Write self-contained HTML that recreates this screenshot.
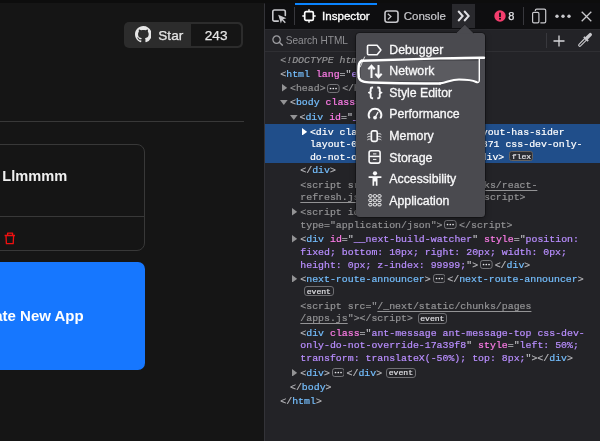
<!DOCTYPE html><html><head><meta charset="utf-8"><style>html,body{margin:0;padding:0;width:600px;height:441px;overflow:hidden;background:#151515;position:relative}</style></head><body><div style="position:absolute;left:0;top:0;width:600px;height:441px;overflow:hidden;will-change:transform"><div style="position:absolute;left:0px;top:0px;width:264px;height:441px;background:#151515;"></div><div style="position:absolute;left:0px;top:0px;width:600px;height:3px;background:#0d0d0d;"></div><div style="position:absolute;left:124px;top:21.5px;width:119px;height:26.5px;border-radius:5px;background:#2c2c2c;"></div><div style="position:absolute;left:191px;top:23.5px;width:50px;height:22.5px;border-radius:0 4px 4px 0;background:#151515;"></div><svg style="position:absolute;left:134.5px;top:26.3px" width="16.7" height="16.7" viewBox="0 0 16 16"><path fill="#e6e6e6" d="M8 0C3.58 0 0 3.58 0 8c0 3.54 2.29 6.53 5.47 7.59.4.07.55-.17.55-.38 0-.19-.01-.82-.01-1.49-2.01.37-2.53-.49-2.69-.94-.09-.23-.48-.94-.82-1.13-.28-.15-.68-.52-.01-.53.63-.01 1.08.58 1.23.82.72 1.21 1.87.87 2.33.66.07-.52.28-.87.51-1.07-1.78-.2-3.64-.89-3.64-3.95 0-.87.31-1.59.82-2.15-.08-.2-.36-1.02.08-2.12 0 0 .67-.21 2.2.82.64-.18 1.32-.27 2-.27.68 0 1.36.09 2 .27 1.53-1.04 2.2-.82 2.2-.82.44 1.1.16 1.92.08 2.12.51.56.82 1.27.82 2.15 0 3.07-1.87 3.75-3.65 3.95.29.25.54.73.54 1.48 0 1.07-.01 1.93-.01 2.2 0 .21.15.46.55.38A8.013 8.013 0 0016 8c0-4.42-3.58-8-8-8z"/></svg><div style="position:absolute;left:158.30px;top:25.68px;line-height:20px;font-size:13.6px;font-family:'Liberation Sans', sans-serif;font-weight:400;color:#e6e6e6;white-space:pre;-webkit-text-stroke:0.25px #e6e6e6;">Star</div><div style="position:absolute;left:204.80px;top:25.68px;line-height:20px;font-size:13.6px;font-family:'Liberation Sans', sans-serif;font-weight:400;color:#e6e6e6;white-space:pre;-webkit-text-stroke:0.25px #e6e6e6;">243</div><div style="position:absolute;left:0px;top:121px;width:243.5px;height:1px;background:#383838;"></div><div style="position:absolute;left:-20px;top:143.6px;width:164.6px;height:107.9px;border:1.2px solid #383838;border-radius:8px;box-sizing:border-box;"></div><div style="position:absolute;left:0px;top:216px;width:144px;height:1.2px;background:#383838;"></div><div style="position:absolute;left:2.30px;top:165.94px;line-height:20px;font-size:14.6px;font-family:'Liberation Sans', sans-serif;font-weight:700;color:#f0f0f0;white-space:pre;">Llmmmm</div><svg style="position:absolute;left:3px;top:231px" width="14" height="15" viewBox="0 0 14 15"><path d="M1.6 4.5H12M4.6 4.3V2.2H9.6V4.3M3 4.6L3.4 12.6H10.2L10.6 4.6" fill="none" stroke="#f01010" stroke-width="1.3" stroke-linejoin="round"/></svg><div style="position:absolute;left:-20px;top:262px;width:165px;height:108.2px;border-radius:7px;background:#1677ff;"></div><div style="position:absolute;left:-30.80px;top:306.20px;line-height:20px;font-size:15px;font-family:'Liberation Sans', sans-serif;font-weight:700;color:#ffffff;white-space:pre;">Create New App</div><div style="position:absolute;left:264px;top:3px;width:336px;height:438px;background:#232327;"></div><div style="position:absolute;left:264px;top:3.5px;width:1px;height:438px;background:#333338;"></div><div style="position:absolute;left:265px;top:3px;width:335px;height:26.2px;background:#0e0e10;"></div><div style="position:absolute;left:265px;top:29px;width:335px;height:1px;background:#2a2a2e;"></div><div style="position:absolute;left:265px;top:50.8px;width:335px;height:1px;background:#2f2f33;"></div><div style="position:absolute;left:294.5px;top:3.2px;width:82.5px;height:2.2px;background:#0a84ff;"></div><div style="position:absolute;left:294px;top:7px;width:1px;height:17.5px;background:#38383d;"></div><svg style="position:absolute;left:270px;top:7px" width="18" height="18" viewBox="0 0 18 18"><path d="M8.3 14.1H4.5C3.4 14.1 2.8 13.5 2.8 12.4V4.7C2.8 3.6 3.4 3 4.5 3H13.6C14.7 3 15.3 3.6 15.3 4.7V8.4" fill="none" stroke="#c8c8cc" stroke-width="1.6" stroke-linecap="round"/><path d="M8.2 7.8L16.4 11.2L13 12.3L15.8 15.3L14.8 16.3L12 13.3L10.9 16.5Z" fill="#c8c8cc"/></svg><svg style="position:absolute;left:302px;top:9px" width="14" height="14" viewBox="0 0 14 14"><rect x="2.7" y="2.7" width="8.6" height="8.6" rx="1.4" fill="none" stroke="#ffffff" stroke-width="1.7"/><path d="M7 0.3V2.6M7 11.4V13.7M0.3 7H2.6M11.4 7H13.7" stroke="#ffffff" stroke-width="1.4"/></svg><div style="position:absolute;left:322.00px;top:5.98px;line-height:20px;font-size:11.6px;font-family:'Liberation Sans', sans-serif;font-weight:400;color:#ffffff;white-space:pre;-webkit-text-stroke:0.32px #fff;">Inspector</div><svg style="position:absolute;left:383.5px;top:9.5px" width="15" height="13" viewBox="0 0 15 13"><rect x="1" y="1" width="13" height="11.2" rx="2.2" fill="none" stroke="#c8c8cc" stroke-width="1.6"/><path d="M3.8 3.7L6.9 6.6L3.8 9.5" fill="none" stroke="#c8c8cc" stroke-width="1.3"/></svg><div style="position:absolute;left:403.70px;top:6.31px;line-height:20px;font-size:11.5px;font-family:'Liberation Sans', sans-serif;font-weight:400;color:#c8c8cc;white-space:pre;-webkit-text-stroke:0.2px #c8c8cc;">Console</div><div style="position:absolute;left:452px;top:3.5px;width:23px;height:24.5px;background:#29292d;"></div><svg style="position:absolute;left:457px;top:10px" width="14" height="12" viewBox="0 0 14 12"><path d="M1.2 1L5.7 6L1.2 11M7.2 1L11.7 6L7.2 11" fill="none" stroke="#e0e0e4" stroke-width="1.9"/></svg><svg style="position:absolute;left:494.3px;top:10px" width="12" height="12" viewBox="0 0 12 12"><circle cx="6" cy="6" r="5.7" fill="#f43d6d"/><rect x="5.1" y="2.4" width="1.8" height="4.6" rx="0.6" fill="#0e0e10"/><circle cx="6" cy="8.8" r="1" fill="#0e0e10"/></svg><div style="position:absolute;left:508.20px;top:6.19px;line-height:20px;font-size:11px;font-family:'Liberation Sans', sans-serif;font-weight:400;color:#e0e0e4;white-space:pre;-webkit-text-stroke:0.25px #e0e0e4;">8</div><div style="position:absolute;left:523px;top:7.3px;width:1px;height:17.5px;background:#38383d;"></div><svg style="position:absolute;left:531px;top:8px" width="16" height="16" viewBox="0 0 16 16"><path d="M4.3 3.1V2.6C4.3 1.7 4.8 1.2 5.7 1.2H13.3C14.2 1.2 14.7 1.7 14.7 2.6V13.4C14.7 14.3 14.2 14.8 13.3 14.8H9.4" fill="none" stroke="#c8c8cc" stroke-width="1.2"/><rect x="1.6" y="4.3" width="6.3" height="10.5" rx="1.3" fill="none" stroke="#c8c8cc" stroke-width="1.2"/></svg><svg style="position:absolute;left:555px;top:13px" width="16" height="6" viewBox="0 0 16 6"><circle cx="2" cy="3.3" r="1.7" fill="#c8c8cc"/><circle cx="8" cy="3.3" r="1.7" fill="#c8c8cc"/><circle cx="14" cy="3.3" r="1.7" fill="#c8c8cc"/></svg><svg style="position:absolute;left:581px;top:10.5px" width="11" height="11" viewBox="0 0 11 11"><path d="M0.7 0.7L10.3 10.3M10.3 0.7L0.7 10.3" stroke="#c8c8cc" stroke-width="1.3"/></svg><svg style="position:absolute;left:271.5px;top:35px" width="12" height="11" viewBox="0 0 12 11"><circle cx="4.6" cy="4.6" r="3.7" fill="none" stroke="#9d9da1" stroke-width="1.3"/><path d="M7.3 7.3L10.8 10.6" stroke="#9d9da1" stroke-width="1.4"/></svg><div style="position:absolute;left:285.70px;top:31.10px;line-height:20px;font-size:10.1px;font-family:'Liberation Sans', sans-serif;font-weight:400;color:#909094;white-space:pre;">Search HTML</div><div style="position:absolute;left:545.5px;top:33px;width:1px;height:14.5px;background:#38383d;"></div><svg style="position:absolute;left:553px;top:34.5px" width="12" height="12" viewBox="0 0 12 12"><path d="M6 0.5V11.5M0.5 6H11.5" stroke="#d7d7db" stroke-width="1.3"/></svg><svg style="position:absolute;left:577px;top:32px" width="16" height="16" viewBox="0 0 16 16"><path d="M2.8 13.1L8.6 7.3" stroke="#c8c8cc" stroke-width="3.4" stroke-linecap="round"/><path d="M2.8 13.1L8.6 7.3" stroke="#232327" stroke-width="1.2" stroke-linecap="round"/><path d="M6.9 4.9L11.1 9.1" stroke="#c8c8cc" stroke-width="1.8"/><path d="M9.6 6.3L13.3 2.6" stroke="#c8c8cc" stroke-width="3.4" stroke-linecap="round"/></svg><div style="position:absolute;left:265px;top:123.8px;width:335px;height:39.4px;background:#204e8a;"></div><div style="position:absolute;left:280.30px;top:51.17px;line-height:20px;font-size:9.9px;font-family:'Liberation Mono', monospace;white-space:pre;-webkit-text-stroke:0.2px currentColor;"><span style="color:#939395;font-style:italic">&lt;!DOCTYPE html&gt;</span></div><div style="position:absolute;left:280.30px;top:65.17px;line-height:20px;font-size:9.9px;font-family:'Liberation Mono', monospace;white-space:pre;-webkit-text-stroke:0.2px currentColor;"><span style="color:#b6b6ba;">&lt;</span><span style="color:#75bfff;">html</span> <span style="color:#ff7de9;">lang</span><span style="color:#b6b6ba;">="</span><span style="color:#b98eff;">en</span><span style="color:#b6b6ba;">"&gt;</span></div><svg style="position:absolute;left:281.8px;top:84.4px" width="5.2" height="7.6" viewBox="0 0 5.2 7.6"><path d="M0 0V7.6L5.2 3.8Z" fill="#939395"/></svg><div style="position:absolute;left:290.00px;top:79.47px;line-height:20px;font-size:9.9px;font-family:'Liberation Mono', monospace;white-space:pre;-webkit-text-stroke:0.2px currentColor;"><span style="color:#939395;">&lt;head&gt;</span><svg style="display:inline-block;vertical-align:-1.2px;margin:0 2.1px 0 1.9px" width="12.6" height="9" viewBox="0 0 12.6 9"><rect x="0.5" y="0.5" width="11.6" height="8" rx="2.3" fill="none" stroke="#77777b" stroke-width="1"/><circle cx="3.55" cy="4.5" r="0.85" fill="#e6e6ea"/><circle cx="6.3" cy="4.5" r="0.85" fill="#e6e6ea"/><circle cx="9.05" cy="4.5" r="0.85" fill="#e6e6ea"/></svg><span style="color:#939395;">&lt;/head&gt;</span></div><svg style="position:absolute;left:280.0px;top:100.0px" width="7.6" height="5" viewBox="0 0 7.6 5"><path d="M0 0H7.6L3.8 5Z" fill="#939395"/></svg><div style="position:absolute;left:290.00px;top:93.27px;line-height:20px;font-size:9.9px;font-family:'Liberation Mono', monospace;white-space:pre;-webkit-text-stroke:0.2px currentColor;"><span style="color:#b6b6ba;">&lt;</span><span style="color:#75bfff;">body</span> <span style="color:#ff7de9;">class</span><span style="color:#b6b6ba;">="</span><span style="color:#b98eff;">app-body</span><span style="color:#b6b6ba;">"&gt;</span></div><svg style="position:absolute;left:290.0px;top:114.5px" width="7.6" height="5" viewBox="0 0 7.6 5"><path d="M0 0H7.6L3.8 5Z" fill="#939395"/></svg><div style="position:absolute;left:299.50px;top:107.77px;line-height:20px;font-size:9.9px;font-family:'Liberation Mono', monospace;white-space:pre;-webkit-text-stroke:0.2px currentColor;"><span style="color:#b6b6ba;">&lt;</span><span style="color:#75bfff;">div</span> <span style="color:#ff7de9;">id</span><span style="color:#b6b6ba;">="</span><span style="color:#b98eff;">__next</span><span style="color:#b6b6ba;">"&gt;</span></div><svg style="position:absolute;left:301.7px;top:127.5px" width="5.2" height="7.6" viewBox="0 0 5.2 7.6"><path d="M0 0V7.6L5.2 3.8Z" fill="#ffffff"/></svg><div style="position:absolute;left:309.90px;top:122.57px;line-height:20px;font-size:9.9px;font-family:'Liberation Mono', monospace;white-space:pre;-webkit-text-stroke:0.2px currentColor;"><span style="color:#ffffff;">&lt;div class="ant-layout ant-layout-has-sider</span></div><div style="position:absolute;left:309.90px;top:135.17px;line-height:20px;font-size:9.9px;font-family:'Liberation Mono', monospace;white-space:pre;-webkit-text-stroke:0.2px currentColor;"><span style="color:#ffffff;">layout-0-2-1 app-layout-s1cc8871 css-dev-only-</span></div><div style="position:absolute;left:309.90px;top:147.67px;line-height:20px;font-size:9.9px;font-family:'Liberation Mono', monospace;white-space:pre;-webkit-text-stroke:0.2px currentColor;"><span style="color:#ffffff;">do-not-override-1a39f8"&gt;</span><svg style="display:inline-block;vertical-align:-1.2px;margin:0 2.1px 0 1.9px" width="12.6" height="9" viewBox="0 0 12.6 9"><rect x="0.5" y="0.5" width="11.6" height="8" rx="2.3" fill="none" stroke="#8a9bb5" stroke-width="1"/><circle cx="3.55" cy="4.5" r="0.85" fill="#e6e6ea"/><circle cx="6.3" cy="4.5" r="0.85" fill="#e6e6ea"/><circle cx="9.05" cy="4.5" r="0.85" fill="#e6e6ea"/></svg><span style="color:#ffffff;">&lt;/div&gt;</span></div><div style="position:absolute;left:509.3px;top:151.3px;width:24.2px;height:10px;border:1px solid #66625f;background:#2b2d33;border-radius:2.5px;box-sizing:border-box"></div><div style="position:absolute;left:511.8px;top:147.04px;line-height:20px;font-size:8.1px;font-family:'Liberation Mono', monospace;color:#e6e6ea;white-space:pre;-webkit-text-stroke:0.2px #e6e6ea">flex</div><div style="position:absolute;left:300.30px;top:160.87px;line-height:20px;font-size:9.9px;font-family:'Liberation Mono', monospace;white-space:pre;-webkit-text-stroke:0.2px currentColor;"><span style="color:#b6b6ba;">&lt;/</span><span style="color:#75bfff;">div</span><span style="color:#b6b6ba;">&gt;</span></div><div style="position:absolute;left:300.30px;top:176.17px;line-height:20px;font-size:9.9px;font-family:'Liberation Mono', monospace;white-space:pre;-webkit-text-stroke:0.2px currentColor;"><span style="color:#939395;">&lt;script src="</span><span style="color:#939395;text-decoration:underline;text-underline-offset:1.5px">/_next/static/chunks/react-</span></div><div style="position:absolute;left:300.30px;top:188.37px;line-height:20px;font-size:9.9px;font-family:'Liberation Mono', monospace;white-space:pre;-webkit-text-stroke:0.2px currentColor;"><span style="color:#939395;text-decoration:underline;text-underline-offset:1.5px">refresh.js?ts=1696512345678</span><span style="color:#939395;">"&gt;&lt;/script&gt;</span></div><svg style="position:absolute;left:292.1px;top:208.0px" width="5.2" height="7.6" viewBox="0 0 5.2 7.6"><path d="M0 0V7.6L5.2 3.8Z" fill="#939395"/></svg><div style="position:absolute;left:300.30px;top:203.07px;line-height:20px;font-size:9.9px;font-family:'Liberation Mono', monospace;white-space:pre;-webkit-text-stroke:0.2px currentColor;"><span style="color:#939395;">&lt;script id="__NEXT_DATA__"</span></div><div style="position:absolute;left:300.30px;top:215.77px;line-height:20px;font-size:9.9px;font-family:'Liberation Mono', monospace;white-space:pre;-webkit-text-stroke:0.2px currentColor;"><span style="color:#939395;">type="application/json"&gt;</span><svg style="display:inline-block;vertical-align:-1.2px;margin:0 2.1px 0 1.9px" width="12.6" height="9" viewBox="0 0 12.6 9"><rect x="0.5" y="0.5" width="11.6" height="8" rx="2.3" fill="none" stroke="#77777b" stroke-width="1"/><circle cx="3.55" cy="4.5" r="0.85" fill="#e6e6ea"/><circle cx="6.3" cy="4.5" r="0.85" fill="#e6e6ea"/><circle cx="9.05" cy="4.5" r="0.85" fill="#e6e6ea"/></svg><span style="color:#939395;">&lt;/script&gt;</span></div><svg style="position:absolute;left:292.1px;top:235.1px" width="5.2" height="7.6" viewBox="0 0 5.2 7.6"><path d="M0 0V7.6L5.2 3.8Z" fill="#939395"/></svg><div style="position:absolute;left:300.30px;top:230.17px;line-height:20px;font-size:9.9px;font-family:'Liberation Mono', monospace;white-space:pre;-webkit-text-stroke:0.2px currentColor;"><span style="color:#b6b6ba;">&lt;</span><span style="color:#75bfff;">div</span> <span style="color:#ff7de9;">id</span><span style="color:#b6b6ba;">="</span><span style="color:#b98eff;">__next-build-watcher</span><span style="color:#b6b6ba;">"</span> <span style="color:#ff7de9;">style</span><span style="color:#b6b6ba;">="</span><span style="color:#b98eff;">position:</span></div><div style="position:absolute;left:300.30px;top:242.87px;line-height:20px;font-size:9.9px;font-family:'Liberation Mono', monospace;white-space:pre;-webkit-text-stroke:0.2px currentColor;"><span style="color:#b98eff;">fixed; bottom: 10px; right: 20px; width: 0px;</span></div><div style="position:absolute;left:300.30px;top:255.57px;line-height:20px;font-size:9.9px;font-family:'Liberation Mono', monospace;white-space:pre;-webkit-text-stroke:0.2px currentColor;"><span style="color:#b98eff;">height: 0px; z-index: 99999;</span><span style="color:#b6b6ba;">"&gt;</span><svg style="display:inline-block;vertical-align:-1.2px;margin:0 2.1px 0 1.9px" width="12.6" height="9" viewBox="0 0 12.6 9"><rect x="0.5" y="0.5" width="11.6" height="8" rx="2.3" fill="none" stroke="#77777b" stroke-width="1"/><circle cx="3.55" cy="4.5" r="0.85" fill="#e6e6ea"/><circle cx="6.3" cy="4.5" r="0.85" fill="#e6e6ea"/><circle cx="9.05" cy="4.5" r="0.85" fill="#e6e6ea"/></svg><span style="color:#b6b6ba;">&lt;/</span><span style="color:#75bfff;">div</span><span style="color:#b6b6ba;">&gt;</span></div><svg style="position:absolute;left:292.1px;top:274.8px" width="5.2" height="7.6" viewBox="0 0 5.2 7.6"><path d="M0 0V7.6L5.2 3.8Z" fill="#939395"/></svg><div style="position:absolute;left:300.30px;top:269.87px;line-height:20px;font-size:9.9px;font-family:'Liberation Mono', monospace;white-space:pre;-webkit-text-stroke:0.2px currentColor;"><span style="color:#b6b6ba;">&lt;</span><span style="color:#75bfff;">next-route-announcer</span><span style="color:#b6b6ba;">&gt;</span><svg style="display:inline-block;vertical-align:-1.2px;margin:0 2.1px 0 1.9px" width="12.6" height="9" viewBox="0 0 12.6 9"><rect x="0.5" y="0.5" width="11.6" height="8" rx="2.3" fill="none" stroke="#77777b" stroke-width="1"/><circle cx="3.55" cy="4.5" r="0.85" fill="#e6e6ea"/><circle cx="6.3" cy="4.5" r="0.85" fill="#e6e6ea"/><circle cx="9.05" cy="4.5" r="0.85" fill="#e6e6ea"/></svg><span style="color:#b6b6ba;">&lt;/</span><span style="color:#75bfff;">next-route-announcer</span><span style="color:#b6b6ba;">&gt;</span></div><div style="position:absolute;left:304.2px;top:285.9px;width:29.8px;height:10.6px;border:1px solid #6e6e72;border-radius:3px;box-sizing:border-box"></div><div style="position:absolute;left:306.7px;top:281.74px;line-height:20px;font-size:8.1px;font-family:'Liberation Mono', monospace;color:#e0e0e4;white-space:pre;-webkit-text-stroke:0.2px #e0e0e4">event</div><div style="position:absolute;left:300.30px;top:296.57px;line-height:20px;font-size:9.9px;font-family:'Liberation Mono', monospace;white-space:pre;-webkit-text-stroke:0.2px currentColor;"><span style="color:#939395;">&lt;script src="</span><span style="color:#939395;text-decoration:underline;text-underline-offset:1.5px">/_next/static/chunks/pages</span></div><div style="position:absolute;left:300.30px;top:309.27px;line-height:20px;font-size:9.9px;font-family:'Liberation Mono', monospace;white-space:pre;-webkit-text-stroke:0.2px currentColor;"><span style="color:#939395;text-decoration:underline;text-underline-offset:1.5px">/apps.js</span><span style="color:#939395;">"&gt;&lt;/script&gt;</span></div><div style="position:absolute;left:417.67881px;top:313.2px;width:29.8px;height:10.6px;border:1px solid #6e6e72;border-radius:3px;box-sizing:border-box"></div><div style="position:absolute;left:420.17881px;top:309.04px;line-height:20px;font-size:8.1px;font-family:'Liberation Mono', monospace;color:#e0e0e4;white-space:pre;-webkit-text-stroke:0.2px #e0e0e4">event</div><div style="position:absolute;left:300.30px;top:323.57px;line-height:20px;font-size:9.9px;font-family:'Liberation Mono', monospace;white-space:pre;-webkit-text-stroke:0.2px currentColor;"><span style="color:#b6b6ba;">&lt;</span><span style="color:#75bfff;">div</span> <span style="color:#ff7de9;">class</span><span style="color:#b6b6ba;">="</span><span style="color:#b98eff;">ant-message ant-message-top css-dev-</span></div><div style="position:absolute;left:300.30px;top:336.27px;line-height:20px;font-size:9.9px;font-family:'Liberation Mono', monospace;white-space:pre;-webkit-text-stroke:0.2px currentColor;"><span style="color:#b98eff;">only-do-not-override-17a39f8</span><span style="color:#b6b6ba;">"</span> <span style="color:#ff7de9;">style</span><span style="color:#b6b6ba;">="</span><span style="color:#b98eff;">left: 50%;</span></div><div style="position:absolute;left:300.30px;top:348.87px;line-height:20px;font-size:9.9px;font-family:'Liberation Mono', monospace;white-space:pre;-webkit-text-stroke:0.2px currentColor;"><span style="color:#b98eff;">transform: translateX(-50%); top: 8px;</span><span style="color:#b6b6ba;">"&gt;</span><span style="color:#b6b6ba;">&lt;/</span><span style="color:#75bfff;">div</span><span style="color:#b6b6ba;">&gt;</span></div><svg style="position:absolute;left:292.1px;top:368.5px" width="5.2" height="7.6" viewBox="0 0 5.2 7.6"><path d="M0 0V7.6L5.2 3.8Z" fill="#939395"/></svg><div style="position:absolute;left:300.30px;top:363.57px;line-height:20px;font-size:9.9px;font-family:'Liberation Mono', monospace;white-space:pre;-webkit-text-stroke:0.2px currentColor;"><span style="color:#b6b6ba;">&lt;</span><span style="color:#75bfff;">div</span><span style="color:#b6b6ba;">&gt;</span><svg style="display:inline-block;vertical-align:-1.2px;margin:0 2.1px 0 1.9px" width="12.6" height="9" viewBox="0 0 12.6 9"><rect x="0.5" y="0.5" width="11.6" height="8" rx="2.3" fill="none" stroke="#77777b" stroke-width="1"/><circle cx="3.55" cy="4.5" r="0.85" fill="#e6e6ea"/><circle cx="6.3" cy="4.5" r="0.85" fill="#e6e6ea"/><circle cx="9.05" cy="4.5" r="0.85" fill="#e6e6ea"/></svg><span style="color:#b6b6ba;">&lt;/</span><span style="color:#75bfff;">div</span><span style="color:#b6b6ba;">&gt;</span></div><div style="position:absolute;left:386.25089px;top:367.5px;width:29.8px;height:10.6px;border:1px solid #6e6e72;border-radius:3px;box-sizing:border-box"></div><div style="position:absolute;left:388.75089px;top:363.34px;line-height:20px;font-size:8.1px;font-family:'Liberation Mono', monospace;color:#e0e0e4;white-space:pre;-webkit-text-stroke:0.2px #e0e0e4">event</div><div style="position:absolute;left:290.00px;top:377.77px;line-height:20px;font-size:9.9px;font-family:'Liberation Mono', monospace;white-space:pre;-webkit-text-stroke:0.2px currentColor;"><span style="color:#b6b6ba;">&lt;/</span><span style="color:#75bfff;">body</span><span style="color:#b6b6ba;">&gt;</span></div><div style="position:absolute;left:280.30px;top:391.77px;line-height:20px;font-size:9.9px;font-family:'Liberation Mono', monospace;white-space:pre;-webkit-text-stroke:0.2px currentColor;"><span style="color:#b6b6ba;">&lt;/</span><span style="color:#75bfff;">html</span><span style="color:#b6b6ba;">&gt;</span></div><div style="position:absolute;left:356.3px;top:32.5px;width:128.7px;height:184px;background:#4a4a4f;border-radius:3.5px;box-shadow:0 0 0 0.6px rgba(0,0,0,0.5), 0 2px 6px rgba(0,0,0,0.35);"></div><svg style="position:absolute;left:455.5px;top:24px" width="18" height="10" viewBox="0 0 18 10"><path d="M0.3 9.3L8.9 0.7L17.3 9.3" fill="#4a4a4f" stroke="rgba(0,0,0,0.45)" stroke-width="0.8"/><path d="M0 9.6L8.9 0.9L17.6 9.6Z" fill="#4a4a4f"/></svg><div style="position:absolute;left:360.5px;top:61px;width:119px;height:20px;background:#5b5b60;"></div><div style="position:absolute;left:389.30px;top:39.54px;line-height:20px;font-size:12.3px;font-family:'Liberation Sans', sans-serif;font-weight:400;color:#f9f9fa;white-space:pre;-webkit-text-stroke:0.3px #f9f9fa;">Debugger</div><div style="position:absolute;left:389.30px;top:61.15px;line-height:20px;font-size:12.3px;font-family:'Liberation Sans', sans-serif;font-weight:400;color:#f9f9fa;white-space:pre;-webkit-text-stroke:0.3px #f9f9fa;">Network</div><div style="position:absolute;left:389.30px;top:82.76px;line-height:20px;font-size:12.3px;font-family:'Liberation Sans', sans-serif;font-weight:400;color:#f9f9fa;white-space:pre;-webkit-text-stroke:0.3px #f9f9fa;">Style Editor</div><div style="position:absolute;left:389.30px;top:104.37px;line-height:20px;font-size:12.3px;font-family:'Liberation Sans', sans-serif;font-weight:400;color:#f9f9fa;white-space:pre;-webkit-text-stroke:0.3px #f9f9fa;">Performance</div><div style="position:absolute;left:389.30px;top:125.98px;line-height:20px;font-size:12.3px;font-family:'Liberation Sans', sans-serif;font-weight:400;color:#f9f9fa;white-space:pre;-webkit-text-stroke:0.3px #f9f9fa;">Memory</div><div style="position:absolute;left:389.30px;top:147.59px;line-height:20px;font-size:12.3px;font-family:'Liberation Sans', sans-serif;font-weight:400;color:#f9f9fa;white-space:pre;-webkit-text-stroke:0.3px #f9f9fa;">Storage</div><div style="position:absolute;left:389.30px;top:169.20px;line-height:20px;font-size:12.3px;font-family:'Liberation Sans', sans-serif;font-weight:400;color:#f9f9fa;white-space:pre;-webkit-text-stroke:0.3px #f9f9fa;">Accessibility</div><div style="position:absolute;left:389.30px;top:190.81px;line-height:20px;font-size:12.3px;font-family:'Liberation Sans', sans-serif;font-weight:400;color:#f9f9fa;white-space:pre;-webkit-text-stroke:0.3px #f9f9fa;">Application</div><svg style="position:absolute;left:366px;top:43.5px" width="17" height="12" viewBox="0 0 17 12"><path d="M2.5 1.3H11.1L14.9 6L11.1 10.7H2.5C1.9 10.7 1.5 10.3 1.5 9.7V2.3C1.5 1.7 1.9 1.3 2.5 1.3Z" fill="none" stroke="#f9f9fa" stroke-width="1.6" stroke-linejoin="round"/></svg><svg style="position:absolute;left:366.5px;top:63.5px" width="16" height="15" viewBox="0 0 16 15"><path d="M4.5 14V2M1.3 5.2L4.5 1.8L7.7 5.2M11.5 1V13.2M8.3 9.8L11.5 13.2L14.7 9.8" fill="none" stroke="#f9f9fa" stroke-width="2"/></svg><svg style="position:absolute;left:366.5px;top:85px" width="16" height="15" viewBox="0 0 16 15"><path d="M6.1,2.5 H5.1 C4.1,2.5 3.7,3 3.7,4 V6 C3.7,7 3.1,7.6 1.9,7.6 C3.1,7.6 3.7,8.2 3.7,9.2 V11.7 C3.7,12.7 4.1,13.2 5.1,13.2 H6.1 M10.3,2.5 H11.3 C12.3,2.5 12.7,3 12.7,4 V6 C12.7,7 13.3,7.6 14.5,7.6 C13.3,7.6 12.7,8.2 12.7,9.2 V11.7 C12.7,12.7 12.3,13.2 11.3,13.2 H10.3" fill="none" stroke="#f9f9fa" stroke-width="1.9" stroke-linejoin="round"/></svg><svg style="position:absolute;left:366.5px;top:106px" width="16" height="14" viewBox="0 0 16 14"><path d="M2.29 11.66A6.3 6.3 0 1 1 13.71 11.66" fill="none" stroke="#f9f9fa" stroke-width="2" stroke-linecap="round"/><path d="M8 11.6L10.9 6.4" fill="none" stroke="#f9f9fa" stroke-width="1.2" stroke-linecap="round"/><circle cx="8" cy="11.6" r="1.9" fill="#f9f9fa"/></svg><svg style="position:absolute;left:366px;top:128.5px" width="17" height="14" viewBox="0 0 17 14"><rect x="5.35" y="1.85" width="5.9" height="10.5" rx="1.6" fill="none" stroke="#f9f9fa" stroke-width="1.7"/><path d="M4.4 4.7C3.4 4.7 2.4 4.6 1.3 5.5M4.4 7.4C3.4 7.4 2.4 7.3 1.3 8.2M4.4 10.1C3.4 10.1 2.4 10 1.3 10.9M12.2 4.7C13.2 4.7 14.2 4.6 15.3 5.5M12.2 7.4C13.2 7.4 14.2 7.3 15.3 8.2M12.2 10.1C13.2 10.1 14.2 10 15.3 10.9" fill="none" stroke="#f9f9fa" stroke-width="0.9"/></svg><svg style="position:absolute;left:367px;top:149px" width="15" height="16" viewBox="0 0 15 16"><rect x="2.1" y="1.7" width="11" height="12.4" rx="2" fill="none" stroke="#f9f9fa" stroke-width="1.6"/><path d="M2.1 7.4H13.1" fill="none" stroke="#f9f9fa" stroke-width="1.5"/><path d="M6 4.9H9.4M6 10.4H9.4" fill="none" stroke="#f9f9fa" stroke-width="1"/></svg><svg style="position:absolute;left:366.5px;top:170px" width="16" height="17" viewBox="0 0 16 17"><circle cx="8" cy="3.3" r="2.1" fill="#f9f9fa"/><path d="M1.6 6.2H14.4V7.9H10.5V15.8H8.8V11.6H7.2V15.8H5.5V7.9H1.6Z" fill="#f9f9fa"/></svg><svg style="position:absolute;left:367px;top:193px" width="15" height="15" viewBox="0 0 15 15"><rect x="1.75" y="1.70" width="3.2" height="2.6" rx="0.9" fill="none" stroke="#f9f9fa" stroke-width="1"/><rect x="6.30" y="1.70" width="3.2" height="2.6" rx="0.9" fill="none" stroke="#f9f9fa" stroke-width="1"/><rect x="10.85" y="1.70" width="3.2" height="2.6" rx="0.9" fill="none" stroke="#f9f9fa" stroke-width="1"/><rect x="1.75" y="6.00" width="3.2" height="2.6" rx="0.9" fill="none" stroke="#f9f9fa" stroke-width="1"/><rect x="6.30" y="6.00" width="3.2" height="2.6" rx="0.9" fill="none" stroke="#f9f9fa" stroke-width="1"/><rect x="10.85" y="6.00" width="3.2" height="2.6" rx="0.9" fill="none" stroke="#f9f9fa" stroke-width="1"/><rect x="1.75" y="10.30" width="3.2" height="2.6" rx="0.9" fill="none" stroke="#f9f9fa" stroke-width="1"/><rect x="6.30" y="10.30" width="3.2" height="2.6" rx="0.9" fill="none" stroke="#f9f9fa" stroke-width="1"/><rect x="10.85" y="10.30" width="3.2" height="2.6" rx="0.9" fill="none" stroke="#f9f9fa" stroke-width="1"/></svg><svg style="position:absolute;left:0;top:0" width="600" height="120" viewBox="0 0 600 120">
<path d="M361.5,60.8 C385,59.9 410,59.2 440,58.4 C460,57.9 475,57.6 484,57.7" fill="none" stroke="#ffffff" stroke-linecap="round" stroke-linejoin="round" stroke-width="2.4"/>
<path d="M479.3,58.3 V80 C479.3,82.4 478.3,83 476.3,82" fill="none" stroke="#ffffff" stroke-linecap="round" stroke-linejoin="round" stroke-width="1.4"/><path d="M476.3,82 C473,80.4 467,79.5 459,79.5 C451,79.6 447,82.5 440,83.4" fill="none" stroke="#ffffff" stroke-linecap="round" stroke-linejoin="round" stroke-width="2.2"/>
<path d="M440,83.4 C420,83.6 395,83.3 372,82.6 C364,82.3 360,81.5 358.8,77.5 C358.3,73 358.4,69 358.7,66 C359.2,62.6 360.2,61.2 362,60.8" fill="none" stroke="#ffffff" stroke-linecap="round" stroke-linejoin="round" stroke-width="2.5"/>
<path d="M364.6,57 L360.2,67" fill="none" stroke="#ffffff" stroke-linecap="round" stroke-linejoin="round" stroke-width="0.8"/>
</svg></div></body></html>
